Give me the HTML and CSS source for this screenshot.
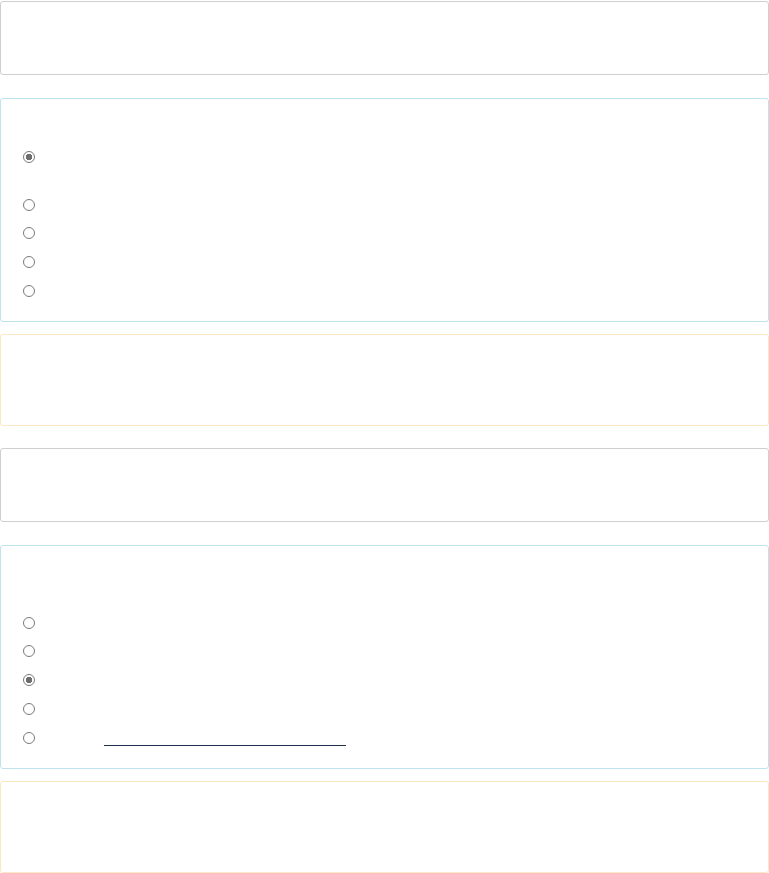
FILE: index.html
```html
<!DOCTYPE html>
<html lang="en">
<head>
  <meta charset="UTF-8">
  <meta name="viewport" content="width=device-width, initial-scale=1.0">
  <title>Quiz</title>
  <link rel="stylesheet" href="styles.css">
</head>
<body>
  <div class="page">
    <div class="panel panel-default"></div>

    <div class="panel panel-info question-one">
      <div class="options">
        <label class="option tall"><input type="radio" name="q1" checked><span class="label"></span></label>
        <label class="option"><input type="radio" name="q1"><span class="label"></span></label>
        <label class="option"><input type="radio" name="q1"><span class="label"></span></label>
        <label class="option"><input type="radio" name="q1"><span class="label"></span></label>
        <label class="option"><input type="radio" name="q1"><span class="label"></span></label>
      </div>
    </div>

    <div class="panel panel-warning"></div>

    <div class="panel panel-default"></div>

    <div class="panel panel-info question-two">
      <div class="options">
        <label class="option"><input type="radio" name="q2"><span class="label"></span></label>
        <label class="option"><input type="radio" name="q2"><span class="label"></span></label>
        <label class="option"><input type="radio" name="q2" checked><span class="label"></span></label>
        <label class="option"><input type="radio" name="q2"><span class="label"></span></label>
        <label class="option"><input type="radio" name="q2"><span class="label"><a class="ref-link" href="#"></a></span></label>
      </div>
    </div>

    <div class="panel panel-warning"></div>
  </div>
</body>
</html>
```

FILE: styles.css
```css
body {
  font-family: "Open Sans", "Liberation Sans", sans-serif;
  font-size: 14px;
  color: #333;
  background: #fff;
  margin: 0;
  padding: 1px 0 0 0;
}
.page {
  display: flex;
  flex-direction: column;
}
.panel {
  box-sizing: border-box;
  border: 1px solid #ccc;
  border-radius: 3px;
  background: #fff;
}
.panel-default {
  height: 74px;
  border-color: #cfcfcf;
}
.panel-info {
  height: 224px;
  border-color: #bfe3ec;
}
.panel-warning {
  height: 92px;
  border-color: #fbe7c2;
}
.panel-default + .panel-info {
  margin-top: 23px;
}
.panel-info + .panel-warning {
  margin-top: 12px;
}
.panel-warning + .panel-default {
  margin-top: 22px;
}
.question-one .options {
  padding-top: 43.6px;
}
.question-two .options {
  padding-top: 62.6px;
}
.options {
  display: flex;
  flex-direction: column;
}
.option {
  display: flex;
  align-items: flex-start;
  height: 28.75px;
  padding-left: 22px;
  box-sizing: border-box;
  padding-top: 8px;
}
.option.tall {
  height: 48px;
}
.option input {
  appearance: none;
  -webkit-appearance: none;
  box-sizing: border-box;
  margin: 0;
  width: 12px;
  height: 12px;
  border: 1px solid #7a7a7a;
  border-radius: 50%;
  background: #fff;
}
.option input:checked {
  background: radial-gradient(circle, #6e6e6e 0 3px, #fff 3.5px);
}
.label {
  display: block;
  flex: 1;
  padding-left: 11px;
}
.ref-link {
  display: block;
  margin-left: 58px;
  margin-top: 13px;
  width: 242px;
  height: 0;
  border-bottom: 1px solid #1d2f4d;
}
```
